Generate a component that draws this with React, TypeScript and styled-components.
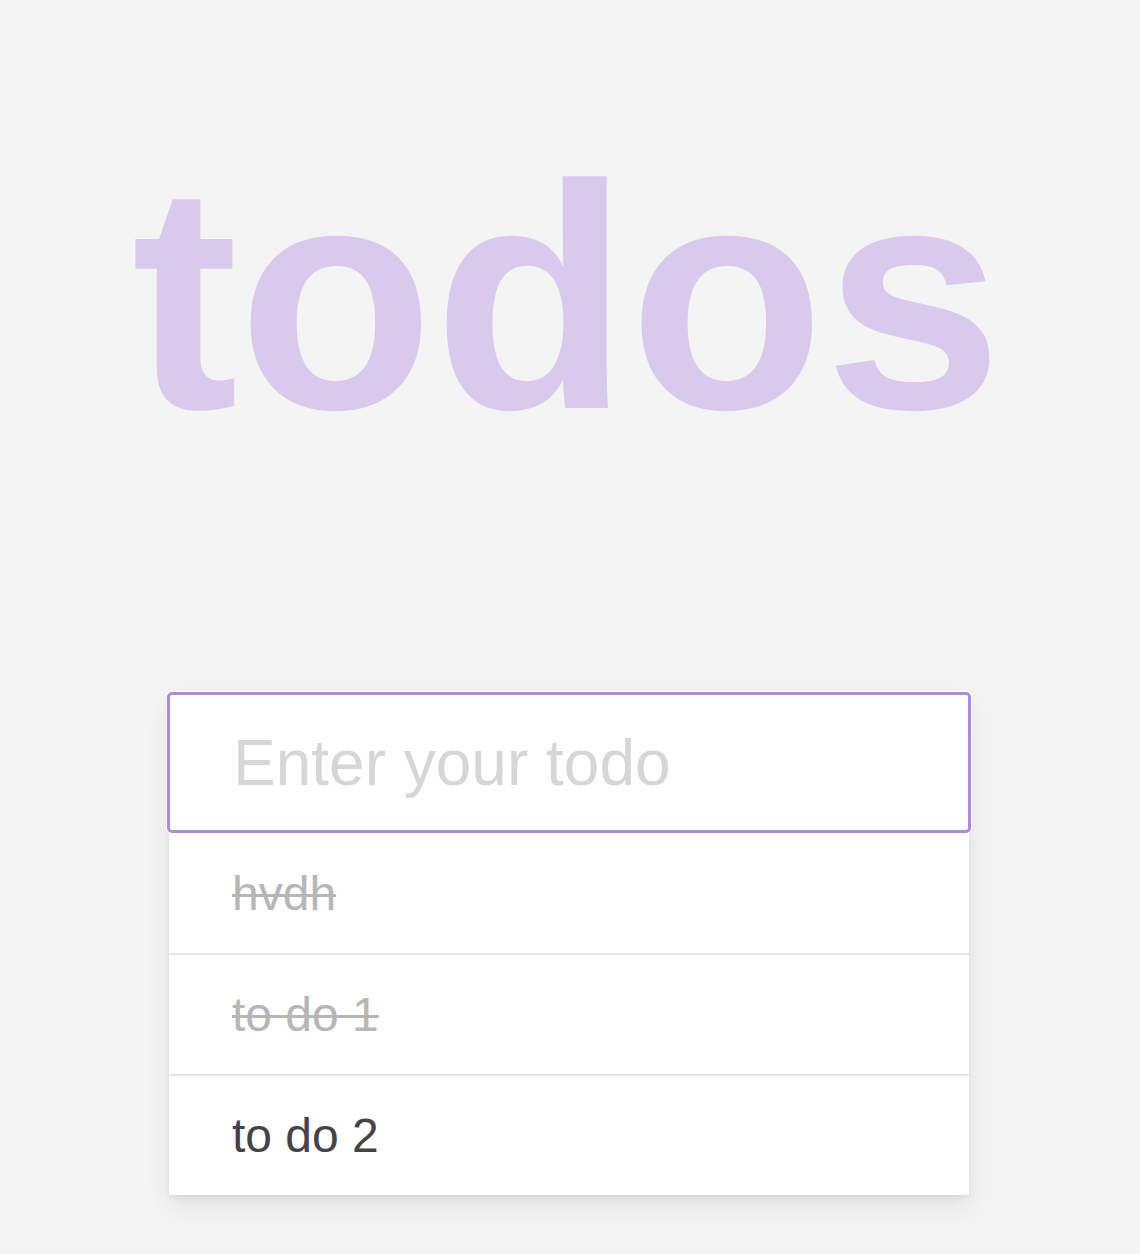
import React from "react";
import styled, { createGlobalStyle } from "styled-components";

const GlobalStyle = createGlobalStyle`
  html, body {
    margin: 0;
    padding: 0;
    background: #f4f4f4;
  }
  body {
    font-family: "Liberation Sans", Arial, Helvetica, sans-serif;
    min-height: 1254px;
  }
`;

const Page = styled.main`
  display: flex;
  flex-direction: column;
  align-items: center;
  padding-top: 137px;
  padding-right: 2px;
`;

const Title = styled.h1`
  margin: 0;
  font-family: "Liberation Sans", Arial, Helvetica, sans-serif;
  font-weight: 700;
  font-size: 320px;
  line-height: 1;
  color: #d8caec;
  padding-right: 4px;
`;

const Card = styled.section`
  margin-top: 235px;
  width: 800px;
  display: flex;
  flex-direction: column;
  background: #fff;
  box-shadow: 0 3px 6px rgba(0, 0, 0, 0.06), 0 12px 28px rgba(0, 0, 0, 0.08);
`;

const TodoInput = styled.input`
  box-sizing: border-box;
  margin: 0 -2px;
  width: 804px;
  height: 141px;
  border: 3px solid #ad8adc;
  border-radius: 5px;
  box-shadow: 0 0 0 1px #ffffff;
  outline: none;
  background: #fff;
  padding: 0 0 0 63px;
  font-family: "Liberation Sans", Arial, Helvetica, sans-serif;
  font-size: 64px;
  color: #4d4d4d;
  &::placeholder {
    color: #d6d6d6;
  }
`;

const List = styled.ul`
  list-style: none;
  margin: 0;
  padding: 0;
  display: flex;
  flex-direction: column;
`;

const Item = styled.li<{ $done: boolean }>`
  box-sizing: border-box;
  height: 121px;
  display: flex;
  align-items: center;
  padding-left: 63px;
  border-bottom: 2px solid #e6e6e6;
  font-size: 48px;
  color: ${(p) => (p.$done ? "#b6b6b6" : "#444444")};
  text-decoration: ${(p) => (p.$done ? "line-through" : "none")};
  text-decoration-thickness: 3px;
  &:first-child {
    height: 122px;
  }
  &:last-child {
    border-bottom: none;
    height: 119px;
  }
`;

const todos = [
  { text: "hvdh", done: true },
  { text: "to do 1", done: true },
  { text: "to do 2", done: false },
];

export default function App() {
  return (
    <>
      <GlobalStyle />
      <Page>
        <Title>todos</Title>
        <Card>
          <TodoInput placeholder="Enter your todo" />
          <List>
            {todos.map((t) => (
              <Item key={t.text} $done={t.done}>
                {t.text}
              </Item>
            ))}
          </List>
        </Card>
      </Page>
    </>
  );
}
